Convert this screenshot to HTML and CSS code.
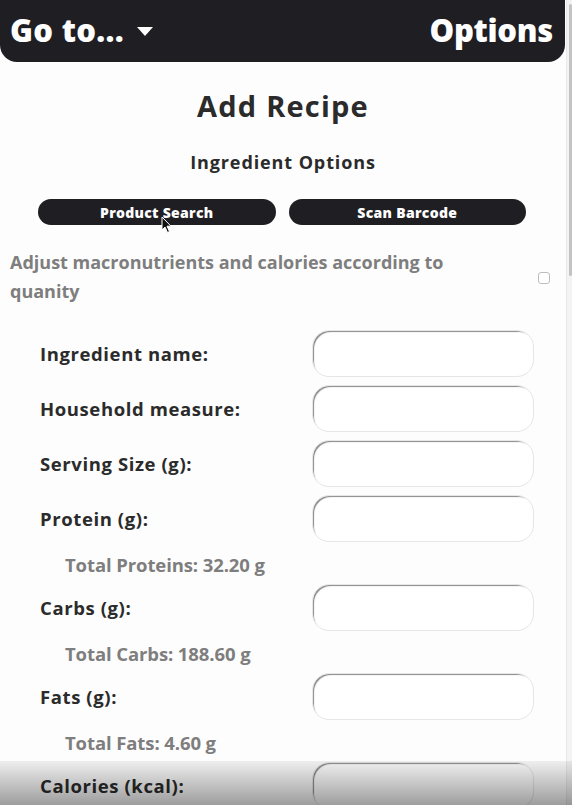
FILE: index.html
```html
<!DOCTYPE html>
<html lang="en">
<head>
<meta charset="utf-8">
<title>Add Recipe</title>
<link rel="stylesheet" href="styles.css">
</head>
<body>
<div class="page">
  <header class="topbar">
    <div class="goto">Go to...<svg class="caret" width="18" height="11" viewBox="0 0 18 11"><path d="M1 1 H17 L9 10 Z" fill="#fff"/></svg></div>
    <div class="options">Options</div>
  </header>
  <main class="content">
    <h1 class="title">Add Recipe</h1>
    <h2 class="subtitle">Ingredient Options</h2>
    <div class="btns">
      <button class="pill">Product Search</button>
      <button class="pill">Scan Barcode</button>
    </div>
    <div class="adjust">
      <p class="adjust-text">Adjust macronutrients and calories according to quanity</p>
      <span class="check"></span>
    </div>
    <form class="form">
      <div class="row"><label>Ingredient name:</label><span class="field"></span></div>
      <div class="row"><label>Household measure:</label><span class="field"></span></div>
      <div class="row"><label>Serving Size (g):</label><span class="field"></span></div>
      <div class="row"><label>Protein (g):</label><span class="field"></span></div>
      <div class="total">Total Proteins: 32.20 g</div>
      <div class="row"><label>Carbs (g):</label><span class="field"></span></div>
      <div class="total">Total Carbs: 188.60 g</div>
      <div class="row"><label>Fats (g):</label><span class="field"></span></div>
      <div class="total">Total Fats: 4.60 g</div>
      <div class="row"><label>Calories (kcal):</label><span class="field"></span></div>
    </form>
  </main>
  <svg class="cursor" width="12" height="18" viewBox="0 0 12 18"><path d="M1 1 L1 14 L4 11 L6.5 16.5 L8.5 15.5 L6 10.2 L10 10.2 Z" fill="#111" stroke="#fff" stroke-width="1"/></svg>
  <div class="scrollbar"><div class="thumb"></div></div>
  <div class="shade"></div>
</div>
</body>
</html>
```
FILE: styles.css
```css
* { box-sizing: border-box; }
html, body { margin: 0; padding: 0; background: #fdfdfd; overflow: hidden; }
body { font-family: "Open Sans", Lato, sans-serif; color: #2b2b2b; }
.page { position: relative; width: 572px; height: 805px; overflow: hidden; }
.topbar {
  width: 565px; height: 62px;
  background: #1f1e23; color: #fff;
  border-radius: 0 0 17px 17px;
  display: flex; justify-content: space-between; align-items: center;
  padding: 0 12px 2px 10px;
  font-weight: 800; font-size: 31px;
}
.goto { display: flex; align-items: center; gap: 12px; letter-spacing: 0.3px; }
.options { letter-spacing: -0.3px; }
.caret { margin-top: 2px; }
.content { width: 566px; }
.title { margin: 27px 0 0; text-align: center; font-size: 29px; font-weight: 700; line-height: 34px; letter-spacing: 1.2px; }
.subtitle { margin: 27px 0 0; text-align: center; font-size: 18px; font-weight: 700; line-height: 24px; letter-spacing: 0.9px; }
.btns { display: flex; gap: 13px; padding: 0 40px 0 38px; margin-top: 25px; }
.pill {
  flex: 1; height: 26px; border: 0; border-radius: 13px; background: #1f1e23; color: #fff;
  font-family: "Open Sans", sans-serif; font-weight: 800; font-size: 14px; padding: 0; letter-spacing: 0.3px;
}
.adjust { display: flex; align-items: center; padding: 0 16px 0 10px; margin-top: 23px; }
.adjust-text { margin: 0; flex: 1; font-size: 18px; font-weight: 700; color: #7e7e7e; line-height: 29px; padding-right: 60px; }
.check { width: 12px; height: 12px; border: 1px solid #bdbdbd; border-radius: 3px; background: #fff; margin-top: 2px; }
.form { padding: 24px 32px 0 40px; margin: 0; }
.row { display: flex; justify-content: space-between; align-items: center; height: 47px; margin-bottom: 8px; }
.row label { font-size: 18.5px; font-weight: 700; color: #2b2b2b; letter-spacing: 0.6px; }
.field {
  width: 222px; height: 47px; border-radius: 17px; background: #fff;
  border: 1px solid #e6e6e6;
  box-shadow: inset 2px 2px 1px -1px #8a8a8a;
}
.total { font-size: 18.5px; font-weight: 700; color: #7e7e7e; padding: 3px 0 0 25px; height: 34px; line-height: 24px; letter-spacing: -0.1px; }
.cursor { position: absolute; left: 161px; top: 216px; }
.scrollbar { position: absolute; right: 0; top: 0; width: 6px; height: 805px; background: #f3f3f3; border-left: 1px solid #e8e8e8; }
.thumb { position: absolute; left: 2px; top: 4px; width: 3px; height: 272px; background: #c4c4c4; border-radius: 2px; }
.shade { position: absolute; left: 0; right: 0; bottom: 0; height: 44px; background: linear-gradient(rgba(0,0,0,0.06), rgba(0,0,0,0.38)); pointer-events: none; }
```
